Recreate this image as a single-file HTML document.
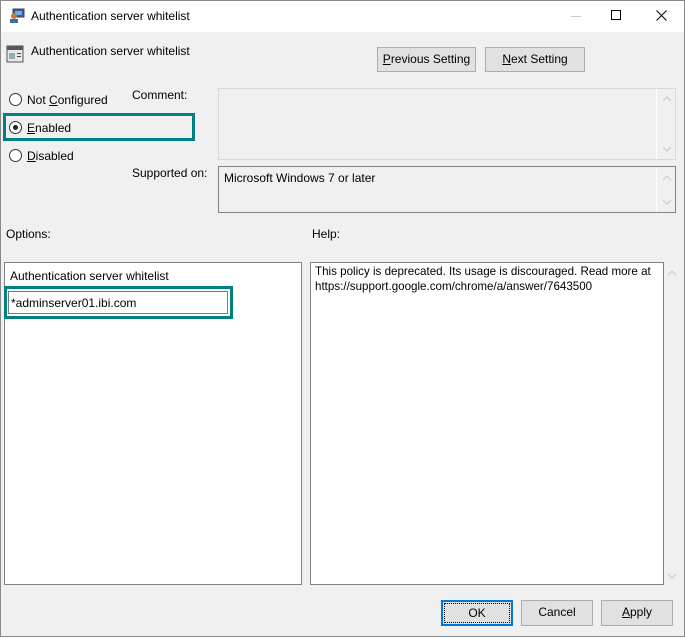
<!DOCTYPE html>
<html><head><style>
*{margin:0;padding:0;box-sizing:border-box}
body{width:685px;height:638px;background:#fff;font-family:"Liberation Sans",sans-serif;font-size:12px;color:#000;position:relative;overflow:hidden}
.win{position:absolute;left:0;top:0;width:685px;height:637px;background:#f0f0f0}
.frame{position:absolute;left:0;top:0;width:685px;height:637px;border:1px solid #888}
.title{position:absolute;left:0;top:0;width:685px;height:32px;background:#fff}
.a{position:absolute;white-space:nowrap}
.btn{position:absolute;background:#e1e1e1;border:1px solid #adadad;text-align:center;line-height:23px}
.radio{position:absolute;width:13px;height:13px;border:1px solid #333;border-radius:50%;background:#fff}
.box{position:absolute;background:#fff;border:1px solid #828282}
.up,.dn{position:absolute}
</style></head><body>
<div class="win">
<div class="title">
 <svg class="a" style="left:9px;top:8px" width="16" height="16"><rect x="4" y="1" width="11" height="8" fill="#2b5fa8" stroke="#444" stroke-width="1"/><rect x="6" y="3" width="7" height="4" fill="#6fa9e6"/><circle cx="5" cy="8" r="3" fill="#c47a3c"/><rect x="1" y="11" width="8" height="4" fill="#3a6fb0"/></svg>
 <div class="a" style="left:31px;top:9px;font-size:12px">Authentication server whitelist</div>
 <div class="a" style="left:571px;top:16px;width:10px;height:1px;background:#ccc"></div>
 <div class="a" style="left:611px;top:10px;width:10px;height:10px;border:1px solid #000"></div>
 <svg class="a" style="left:656px;top:10px" width="11" height="11"><path d="M0.5 0.5L10.5 10.5M10.5 0.5L0.5 10.5" stroke="#000" stroke-width="1"/></svg>
</div>
<svg class="a" style="left:6px;top:45px" width="18" height="18"><rect x="1" y="1" width="16" height="16" fill="#e8e8e8" stroke="#555"/><rect x="1" y="1" width="16" height="4" fill="#556"/><rect x="3" y="8" width="6" height="6" fill="#9ab"/><rect x="11" y="8" width="4" height="1" fill="#444"/><rect x="11" y="11" width="4" height="1" fill="#444"/></svg>
<div class="a" style="left:31px;top:44px">Authentication server whitelist</div>
<div class="btn" style="left:377px;top:47px;width:99px;height:25px"><u>P</u>revious Setting</div>
<div class="btn" style="left:485px;top:47px;width:100px;height:25px"><u>N</u>ext Setting</div>

<div class="radio" style="left:9px;top:93px"></div>
<div class="a" style="left:27px;top:93px">Not <u>C</u>onfigured</div>
<div class="a" style="left:3px;top:113px;width:192px;height:28px;border:3px solid #008080"></div>
<div class="radio" style="left:9px;top:121px"></div>
<div class="a" style="left:13px;top:125px;width:5px;height:5px;border-radius:50%;background:#222"></div>
<div class="a" style="left:27px;top:121px"><u>E</u>nabled</div>
<div class="radio" style="left:9px;top:149px"></div>
<div class="a" style="left:27px;top:149px"><u>D</u>isabled</div>

<div class="a" style="left:132px;top:88px">Comment:</div>
<div class="a" style="left:218px;top:88px;width:458px;height:72px;border:1px solid #d9d9d9;background:#f0f0f0"></div>
<div class="a" style="left:656px;top:89px;width:1px;height:70px;background:#fff"></div>
<svg class="a" style="left:662px;top:96px" width="10" height="6"><path d="M1 5L5 1L9 5" stroke="#c8c8c8" fill="none"/></svg>
<svg class="a" style="left:662px;top:146px" width="10" height="6"><path d="M1 1L5 5L9 1" stroke="#c8c8c8" fill="none"/></svg>
<div class="a" style="left:132px;top:166px">Supported on:</div>
<div class="a" style="left:218px;top:166px;width:458px;height:47px;border:1px solid #828282;background:#f0f0f0"></div>
<div class="a" style="left:656px;top:167px;width:1px;height:45px;background:#fff"></div>
<div class="a" style="left:224px;top:171px">Microsoft Windows 7 or later</div>
<svg class="a" style="left:662px;top:175px" width="10" height="6"><path d="M1 5L5 1L9 5" stroke="#c8c8c8" fill="none"/></svg>
<svg class="a" style="left:662px;top:199px" width="10" height="6"><path d="M1 1L5 5L9 1" stroke="#c8c8c8" fill="none"/></svg>

<div class="a" style="left:6px;top:227px">Options:</div>
<div class="a" style="left:312px;top:227px">Help:</div>
<div class="box" style="left:4px;top:262px;width:298px;height:323px"></div>
<div class="a" style="left:10px;top:269px">Authentication server whitelist</div>
<div class="a" style="left:4px;top:286px;width:229px;height:33px;border:3px solid #008080"></div>
<div class="a" style="left:8px;top:291px;width:220px;height:23px;border:1px solid #7a7a7a;background:#fff"></div>
<div class="a" style="left:11px;top:296px">*adminserver01.ibi.com</div>
<div class="box" style="left:310px;top:262px;width:354px;height:323px"></div>
<div class="a" style="left:315px;top:264px;line-height:15px;font-size:11.6px">This policy is deprecated. Its usage is discouraged. Read more at<br>https://support.google.com/chrome/a/answer/7643500</div>
<svg class="a" style="left:667px;top:270px" width="10" height="6"><path d="M1 5L5 1L9 5" stroke="#c8c8c8" fill="none"/></svg>
<svg class="a" style="left:667px;top:573px" width="10" height="6"><path d="M1 1L5 5L9 1" stroke="#c8c8c8" fill="none"/></svg>

<div class="btn" style="left:441px;top:600px;width:72px;height:26px;border:2px solid #0078d7;line-height:22px"><span style="outline:1px dotted #000;display:inline-block;width:64px;line-height:18px">OK</span></div>
<div class="btn" style="left:521px;top:600px;width:72px;height:26px">Cancel</div>
<div class="btn" style="left:601px;top:600px;width:72px;height:26px"><u>A</u>pply</div>
</div>
<div class="frame"></div>
</body></html>
